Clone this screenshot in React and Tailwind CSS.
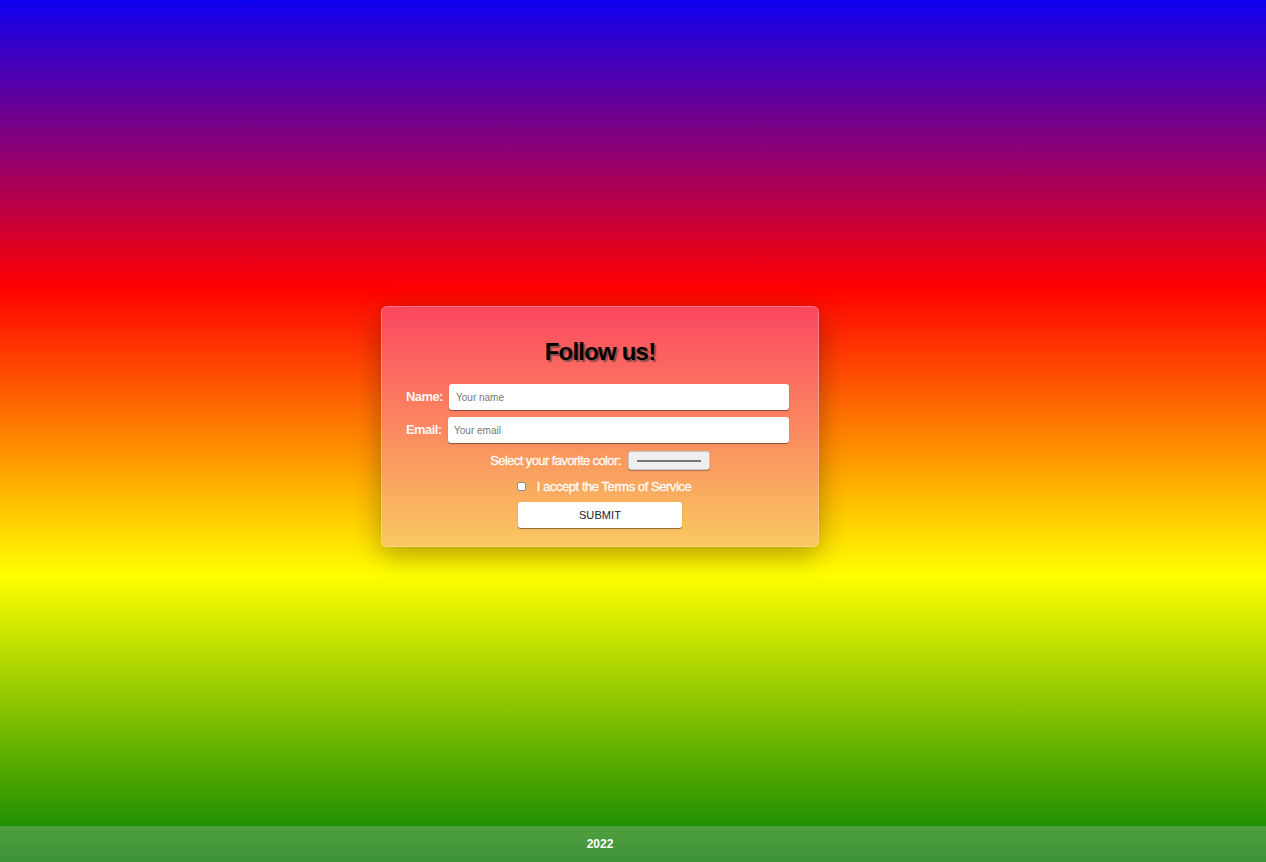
export default function App() {
    return (
        <div className="min-h-screen flex flex-col bg-[linear-gradient(#0f00f0,#ff0000,#ffff00,#008000)] font-['Liberation_Sans',Arial,sans-serif]">
            <main className="w-[1200px] flex-1 flex justify-center pt-[306px]">
                <div className="w-[438px] h-[241px] rounded-[6px] border border-white/25 bg-origin-border bg-[linear-gradient(#fc4760,#f9c95f)] shadow-[0_8px_28px_rgba(0,0,0,0.32)] pt-[31px] flex flex-col">
                    <h1 className="text-center text-[24px] leading-[28px] font-bold tracking-[-0.8px] text-black [text-shadow:2px_2px_1px_rgba(60,60,60,0.6)]">
                        Follow us!
                    </h1>

                    <div className="mt-[18px] flex items-center pl-[24px] pr-[29px] gap-[8px]">
                        <label className="text-[13px] font-bold tracking-[-0.6px] text-white/95 w-[35px] text-right">Name:</label>
                        <input
                            type="text"
                            placeholder="Your name"
                            className="flex-1 h-[26px] rounded-[3px] bg-white px-[7px] text-[10px] text-[#333] placeholder:text-[#777] outline-none shadow-[0_1px_1px_rgba(0,0,0,0.45)]"
                        />
                    </div>

                    <div className="mt-[7px] flex items-center pl-[24px] pr-[29px] gap-[8px]">
                        <label className="text-[13px] font-bold tracking-[-0.6px] text-white/95 w-[34px] text-right">Email:</label>
                        <input
                            type="text"
                            placeholder="Your email"
                            className="flex-1 h-[26px] rounded-[3px] bg-white px-[6px] text-[10px] text-[#333] placeholder:text-[#777] outline-none shadow-[0_1px_1px_rgba(0,0,0,0.45)]"
                        />
                    </div>

                    <div className="mt-[8px] flex items-center justify-center gap-[7px]">
                        <span className="text-[13px] tracking-[-0.6px] text-white/95 [-webkit-text-stroke:0.3px_white]">Select your favorite color:</span>
                        <div className="w-[82px] h-[19px] rounded-[3px] bg-[#efefef] border border-[#c9c9c9] shadow-[0_1px_1px_rgba(0,0,0,0.3)] flex items-center justify-center">
                            <div className="w-[64px] h-[2px] bg-[#777]" />
                        </div>
                    </div>

                    <div className="mt-[6px] flex items-center justify-center gap-[11px] pl-[8px]">
                        <span className="w-[9px] h-[9px] rounded-[2px] bg-white border border-[#8a8a8a]" />
                        <span className="text-[13px] tracking-[-0.45px] text-white/95 [-webkit-text-stroke:0.3px_white]">I accept the Terms of Service</span>
                    </div>

                    <div className="mt-[6px] flex justify-center">
                        <button className="w-[164px] h-[26px] rounded-[3px] bg-white text-[11px] text-[#222] tracking-[0.1px] shadow-[0_1px_1px_rgba(0,0,0,0.45)]">
                            SUBMIT
                        </button>
                    </div>
                </div>
            </main>

            <footer className="h-[36px] w-full bg-[linear-gradient(#4f9f3e,#3e9337)] flex items-center">
                <p className="w-[1200px] text-center text-[12px] font-bold text-white">2022</p>
            </footer>
        </div>
    );
}
